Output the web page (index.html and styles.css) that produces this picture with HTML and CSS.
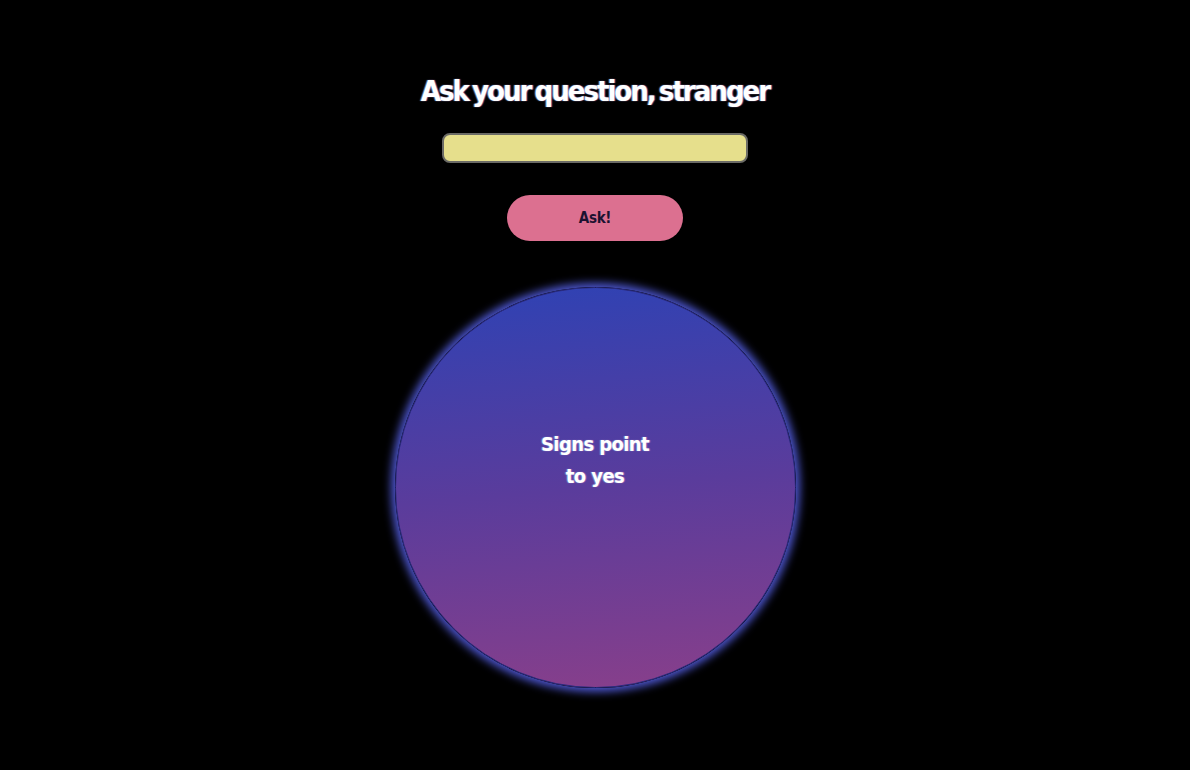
FILE: index.html
```html
<!DOCTYPE html>
<html lang="en">
<head>
<meta charset="utf-8">
<title>Magic 8 Ball</title>
<link rel="stylesheet" href="styles.css">
</head>
<body>
<main class="app">
  <h1 class="title">Ask your question, stranger</h1>
  <input class="question" type="text" aria-label="Question">
  <button class="ask" type="button">Ask!</button>
  <div class="ball">
    <p class="answer">Signs point<br>to yes</p>
  </div>
</main>
</body>
</html>
```
FILE: styles.css
```css
html, body {
  margin: 0;
  padding: 0;
  background: #000;
  height: 100%;
}
body {
  font-family: "DejaVu Sans Condensed", "Liberation Sans Narrow", "Liberation Sans", sans-serif;
}
.app {
  display: flex;
  flex-direction: column;
  align-items: center;
  padding-top: 70px;
}
.title {
  margin: 0;
  color: #fff;
  font-size: 29px;
  font-weight: bold;
  letter-spacing: -2px;
  word-spacing: -3px;
  line-height: 42px;
  text-shadow: -1px 0 1px rgba(120, 170, 255, 0.8), 1px 0 1px rgba(255, 140, 190, 0.7);
}
.question {
  margin-top: 21px;
  width: 306px;
  height: 30px;
  box-sizing: border-box;
  background: #e6df8c;
  border: 2px solid #6b6b66;
  border-radius: 8px;
  outline: none;
}
.ask {
  margin-top: 32px;
  width: 176px;
  height: 46px;
  border: none;
  border-radius: 23px;
  background: #dc7090;
  color: #1c1230;
  font-family: inherit;
  font-size: 15px;
  font-weight: bold;
  letter-spacing: -0.3px;
}
.ball {
  margin-top: 46px;
  width: 401px;
  height: 401px;
  box-sizing: border-box;
  border-radius: 50%;
  border: 1px solid #2a2a80;
  background: linear-gradient(175deg, #2e42b4 0%, #5a3c9c 50%, #893f8a 100%);
  box-shadow: 0 0 8px 4px #4c55cc;
  display: flex;
  align-items: center;
  justify-content: center;
  padding-bottom: 56px;
}
.answer {
  margin: 0;
  color: #fff;
  text-align: center;
  font-size: 20px;
  font-weight: bold;
  letter-spacing: -0.6px;
  line-height: 32px;
  text-shadow: -1px 0 1px rgba(120, 200, 255, 0.6), 1px 0 1px rgba(255, 140, 190, 0.6);
}
```
